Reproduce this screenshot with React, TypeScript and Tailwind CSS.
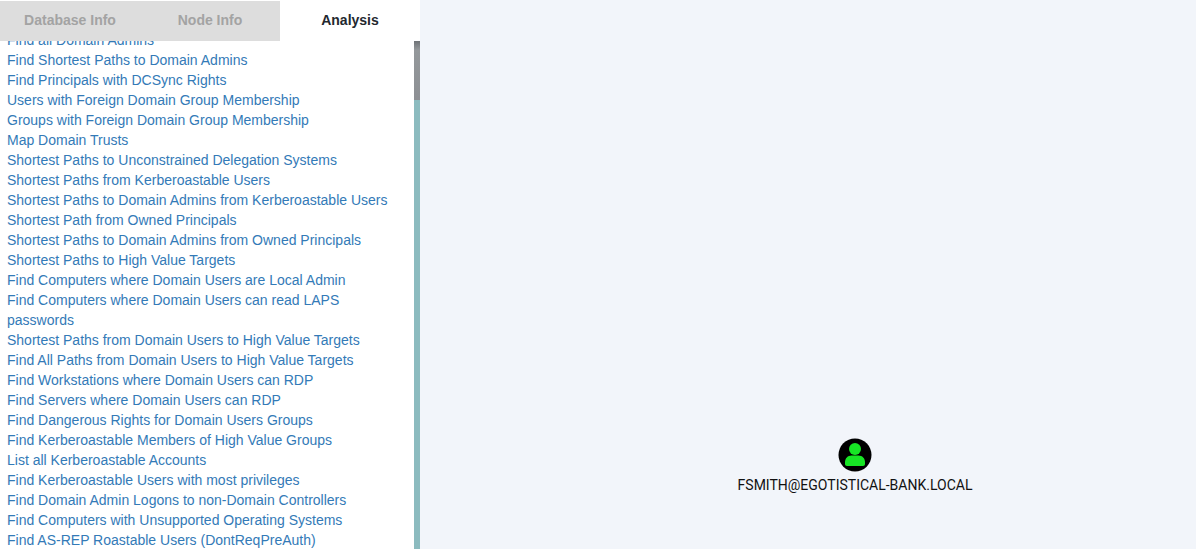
import React from 'react';

const queries = [
  'Find all Domain Admins',
  'Find Shortest Paths to Domain Admins',
  'Find Principals with DCSync Rights',
  'Users with Foreign Domain Group Membership',
  'Groups with Foreign Domain Group Membership',
  'Map Domain Trusts',
  'Shortest Paths to Unconstrained Delegation Systems',
  'Shortest Paths from Kerberoastable Users',
  'Shortest Paths to Domain Admins from Kerberoastable Users',
  'Shortest Path from Owned Principals',
  'Shortest Paths to Domain Admins from Owned Principals',
  'Shortest Paths to High Value Targets',
  'Find Computers where Domain Users are Local Admin',
  'Find Computers where Domain Users can read LAPS passwords',
  'Shortest Paths from Domain Users to High Value Targets',
  'Find All Paths from Domain Users to High Value Targets',
  'Find Workstations where Domain Users can RDP',
  'Find Servers where Domain Users can RDP',
  'Find Dangerous Rights for Domain Users Groups',
  'Find Kerberoastable Members of High Value Groups',
  'List all Kerberoastable Accounts',
  'Find Kerberoastable Users with most privileges',
  'Find Domain Admin Logons to non-Domain Controllers',
  'Find Computers with Unsupported Operating Systems',
  'Find AS-REP Roastable Users (DontReqPreAuth)',
];

const tabs = ['Database Info', 'Node Info'];

const UserNode = () => (
  <svg viewBox="0 0 34 34" className="w-[34px] h-[34px]">
    <circle cx="17" cy="17" r="16.5" fill="#000" />
    <circle cx="17" cy="11" r="6" fill="#17e625" />
    <path d="M7 26 v-2 c0 -3.6 2.8 -6.5 6.5 -6.5 h7 c3.7 0 6.500 2.900 6.500 6.500 v2 c0 1.200 -0.800 2 -2 2 h-16 c-1.200 0 -2 -0.800 -2 -2 z" fill="#17e625" />
  </svg>
);

export default function App() {
  return (
    <div className="relative flex h-[549px] w-[1196px] overflow-hidden bg-[#f2f5fa] font-['Liberation_Sans',Arial,sans-serif]">
      {/* Side panel */}
      <aside className="flex h-full w-[420px] shrink-0 flex-col bg-white">
        <div className="flex h-[41px] shrink-0 pt-px text-sm font-bold">
          {tabs.map((tab) => (
            <div key={tab} className="flex w-[140px] items-center justify-center bg-[#dddddd] pb-[2px] text-[#a3a3a3]">
              {tab}
            </div>
          ))}
          <div className="flex w-[140px] items-center justify-center bg-white pb-[2px] text-[#23282f]">Analysis</div>
        </div>

        <div className="flex min-h-0 flex-1">
          <div className="min-w-0 flex-1 overflow-hidden">
            <ul className="-mt-[11px] pl-[7px] pr-[16px] text-sm leading-5 text-[#337ab7]">
              {queries.map((q) => (
                <li key={q}>{q}</li>
              ))}
            </ul>
          </div>
          {/* Scrollbar */}
          <div className="w-[6px] shrink-0 bg-[#8cbbbf]">
            <div className="h-[59px] bg-gradient-to-b from-[#6f7377] via-[#94989b] via-[15%] to-[#8d9094]" />
          </div>
        </div>
      </aside>

      {/* Graph canvas */}
      <div className="absolute left-[738px] top-[438px] flex w-[234px] flex-col items-center">
        <UserNode />
        <span className="mt-[3px] whitespace-nowrap font-['Roboto',sans-serif] text-sm leading-5 text-[#111]">
          FSMITH@EGOTISTICAL-BANK.LOCAL
        </span>
      </div>
    </div>
  );
}
